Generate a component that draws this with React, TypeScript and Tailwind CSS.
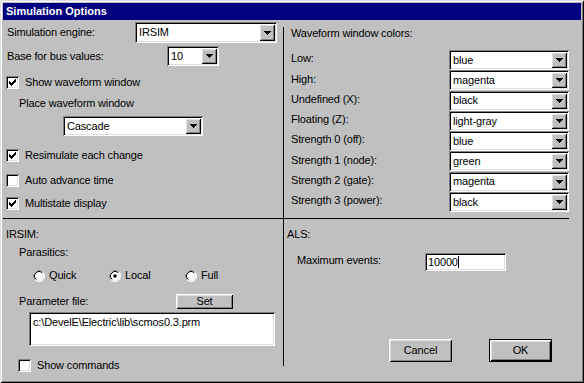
import React from 'react';

const sunken =
  'shadow-[inset_1px_1px_#808080,inset_-1px_-1px_#ffffff,inset_2px_2px_#000000,inset_-2px_-2px_#dfdfdf]';
const raised =
  'shadow-[inset_1px_1px_#ffffff,inset_-1px_-1px_#000000,inset_2px_2px_#dfdfdf,inset_-2px_-2px_#808080]';

const Arrow = () => (
  <svg width="7" height="4" viewBox="0 0 7 4" shapeRendering="crispEdges">
    <path d="M0 0h7v1h-1v1h-1v1h-1v1h-1v-1h-1v-1h-1v-1h-1z" fill="#000" />
  </svg>
);

const Combo: React.FC<{ value: string; className: string }> = ({ value, className }) => (
  <div className={`${sunken} bg-white flex p-[2px] shrink-0 ${className}`}>
    <span className="flex-1 flex items-center pl-[2px] whitespace-nowrap">{value}</span>
    <div className={`${raised} bg-[#c0c0c0] w-[16px] flex items-center justify-center`}>
      <Arrow />
    </div>
  </div>
);

const Check: React.FC<{ checked?: boolean }> = ({ checked }) => (
  <div className={`${sunken} bg-white w-[13px] h-[13px] shrink-0 flex items-center justify-center`}>
    {checked && (
      <svg width="7" height="7" viewBox="0 0 7 7" shapeRendering="crispEdges">
        <path
          d="M6 0h1v1h-1z M5 1h2v1h-2z M0 2h1v1h-1z M4 2h3v1h-3z M0 3h2v1h-2z M3 3h3v1h-3z M0 4h5v1h-5z M1 5h3v1h-3z M2 6h1v1h-1z"
          fill="#000"
        />
      </svg>
    )}
  </div>
);

const CheckRow: React.FC<{ checked?: boolean; label: string; className: string }> = ({ checked, label, className }) => (
  <div className={`flex items-center gap-[6px] ${className}`}>
    <Check checked={checked} />
    <span className="leading-[13px]">{label}</span>
  </div>
);

const Radio: React.FC<{ checked?: boolean; label: string }> = ({ checked, label }) => (
  <div className="w-[76px] flex items-center gap-[4px]">
    <svg width="12" height="12" viewBox="0 0 12 12">
      <circle cx="6" cy="6" r="5.5" fill="#fff" stroke="#fff" />
      <path d="M2.11 9.89 A5.5 5.5 0 0 1 9.89 2.11" fill="none" stroke="#808080" />
      <circle cx="6" cy="6" r="4.5" fill="#fff" stroke="#dfdfdf" />
      <path d="M2.82 9.18 A4.5 4.5 0 0 1 9.18 2.82" fill="none" stroke="#000" />
      {checked && <circle cx="6" cy="6" r="1.8" fill="#000" />}
    </svg>
    <span className="leading-[13px]">{label}</span>
  </div>
);

const colorRows: [string, string][] = [
  ['Low:', 'blue'],
  ['High:', 'magenta'],
  ['Undefined (X):', 'black'],
  ['Floating (Z):', 'light-gray'],
  ['Strength 0 (off):', 'blue'],
  ['Strength 1 (node):', 'green'],
  ['Strength 2 (gate):', 'magenta'],
  ['Strength 3 (power):', 'black'],
];

export default function App() {
  return (
    <div
      className={`w-[584px] h-[383px] bg-[#c0c0c0] p-[3px] text-black text-[11px] tracking-[-0.15px] font-[Liberation_Sans,Arial,sans-serif] shadow-[inset_1px_1px_#dfdfdf,inset_-1px_-1px_#000000,inset_2px_2px_#ffffff,inset_-2px_-2px_#808080]`}
    >
      <div className="h-[17px] bg-[#000080] text-white font-bold tracking-normal leading-[17px] pl-[3px]">Simulation Options</div>

      <div className="flex h-[360px]">
        {/* left column */}
        <div className="w-[280px] shrink-0 flex flex-col">
          <div className="h-[199px] border-b border-black flex flex-col">
            <div className="mt-[2px] flex items-center pl-[4px]">
              <span className="w-[128px]">Simulation engine:</span>
              <Combo value="IRSIM" className="w-[142px] h-[21px]" />
            </div>
            <div className="mt-[3px] flex items-center pl-[4px]">
              <span className="w-[160px]">Base for bus values:</span>
              <Combo value="10" className="w-[52px] h-[20px]" />
            </div>
            <CheckRow checked label="Show waveform window" className="mt-[10px] pl-[3px]" />
            <div className="mt-[8px] pl-[16px] leading-[13px]">Place waveform window</div>
            <div className="mt-[6px] pl-[60px]">
              <Combo value="Cascade" className="w-[140px] h-[20px]" />
            </div>
            <CheckRow checked label="Resimulate each change" className="mt-[13px] pl-[3px]" />
            <CheckRow label="Auto advance time" className="mt-[12px] pl-[3px]" />
            <CheckRow checked label="Multistate display" className="mt-[10px] pl-[3px]" />
          </div>

          <div className="flex flex-col">
            <div className="mt-[9px] pl-[3px] leading-[13px]">IRSIM:</div>
            <div className="mt-[5px] pl-[16px] leading-[13px]">Parasitics:</div>
            <div className="mt-[10px] pl-[30px] flex">
              <Radio label="Quick" />
              <Radio checked label="Local" />
              <Radio label="Full" />
            </div>
            <div className="mt-[12px] pl-[16px] flex items-center h-[15px]">
              <span className="w-[157px]">Parameter file:</span>
              <div className={`${raised} w-[57px] h-[15px] flex items-center justify-center`}>Set</div>
            </div>
            <div className={`mt-[3px] ml-[26px] w-[246px] h-[34px] bg-white ${sunken} pl-[4px] pt-[4px] leading-[13px]`}>
              c:\DevelE\Electric\lib\scmos0.3.prm
            </div>
            <CheckRow label="Show commands" className="mt-[13px] pl-[15px]" />
          </div>
        </div>

        {/* divider */}
        <div className="w-px bg-black mt-[7px] mb-[14px] shrink-0" />

        {/* right column */}
        <div className="flex-1 flex flex-col">
          <div className="h-[199px] mr-[14px] border-b border-black flex flex-col">
            <div className="mt-[7px] pl-[7px] leading-[13px]">Waveform window colors:</div>
            <div className="mt-[10px] flex flex-col">
              {colorRows.map(([label, value]) => (
                <div key={label} className="flex items-center pl-[7px] h-[20.25px]">
                  <span className="w-[158px] shrink-0 pb-[3px]">{label}</span>
                  <Combo value={value} className="w-[120px] h-[20px]" />
                </div>
              ))}
            </div>
          </div>

          <div className="flex flex-col">
            <div className="mt-[9px] pl-[3px] leading-[13px]">ALS:</div>
            <div className="mt-[11px] pl-[13px] flex items-center">
              <span className="w-[128px] pb-[3px]">Maximum events:</span>
              <div className={`${sunken} bg-white w-[81px] h-[18px] flex items-center pl-[3px]`}>
                <span>10000</span>
                <span className="w-px h-[12px] bg-black" />
              </div>
            </div>
            <div className="mt-[67px] pl-[105px] flex gap-[37px]">
              <div className={`${raised} w-[63px] h-[23px] flex items-center justify-center`}>Cancel</div>
              <div className="w-[63px] h-[23px] border border-black">
                <div className={`${raised} w-full h-full flex items-center justify-center`}>OK</div>
              </div>
            </div>
          </div>
        </div>
      </div>
    </div>
  );
}
